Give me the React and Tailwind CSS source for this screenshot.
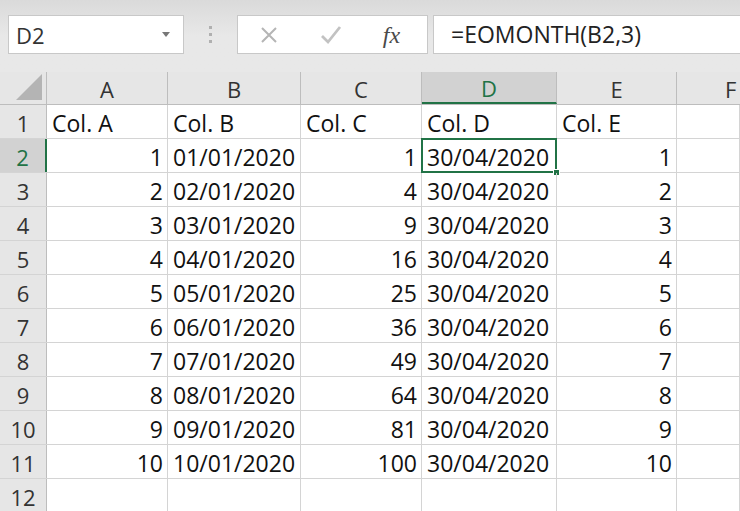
import React from "react";

const cols = [
  { key: "A", w: "w-[121px]" },
  { key: "B", w: "w-[133px]" },
  { key: "C", w: "w-[121px]" },
  { key: "D", w: "w-[135px]" },
  { key: "E", w: "w-[120px]" },
  { key: "F", w: "flex-1" },
];

const rows = [
  ["Col. A", "Col. B", "Col. C", "Col. D", "Col. E"],
];
for (let i = 1; i <= 10; i++) {
  rows.push([
    String(i),
    `${String(i).padStart(2, "0")}/01/2020`,
    String(i * i),
    "30/04/2020",
    String(i),
  ]);
}
rows.push(["", "", "", "", ""]);

const font = { fontFamily: '"Open Sans", "Noto Sans", sans-serif' };

export default function App() {
  return (
    <div className="w-[740px] h-[511px] overflow-hidden bg-white text-[#222]" style={font}>
      {/* Toolbar */}
      <div className="h-[72px] bg-gradient-to-b from-[#dadada] via-[#e8e8e8] to-[#e8e8e8] flex items-start pt-[15px] pl-[8px]">
        <div className="w-[176px] h-[39px] bg-white border border-[#c8c8c8] flex items-center pl-[7px] pr-[13px]">
          <span className="text-[22px] text-[#333] flex-1 leading-none">D2</span>
          <svg width="8" height="5" viewBox="0 0 8 5"><path d="M0 0h8L4 5z" fill="#777" /></svg>
        </div>
        <div className="w-[53px] h-[39px] flex flex-col items-center justify-center gap-[4px]">
          <div className="w-[3px] h-[3px] bg-[#b0b0b0]" />
          <div className="w-[3px] h-[3px] bg-[#b0b0b0]" />
          <div className="w-[3px] h-[3px] bg-[#b0b0b0]" />
        </div>
        <div className="w-[191px] h-[39px] bg-white border border-[#c8c8c8] flex items-center">
          <div className="w-[62px] flex justify-center">
            <svg width="20" height="20" viewBox="0 0 20 20"><path d="M3 3L17 17M17 3L3 17" stroke="#b5b5b5" strokeWidth="2" /></svg>
          </div>
          <div className="w-[62px] flex justify-center">
            <svg width="22" height="20" viewBox="0 0 22 20"><path d="M2 11l6 6L20 2" stroke="#c2c2c2" strokeWidth="2.8" fill="none" /></svg>
          </div>
          <div className="flex-1 flex justify-center pr-[6px]">
            <span className="italic text-[24px] text-[#4a4a4a] leading-none" style={{ fontFamily: '"Liberation Serif", serif' }}>fx</span>
          </div>
        </div>
        <div className="ml-[5px] flex-1 h-[39px] bg-white border border-[#c8c8c8] border-r-0 flex items-center pl-[17px]">
          <span className="text-[23px] text-[#222] leading-none">=EOMONTH(B2,3)</span>
        </div>
      </div>

      {/* Column headers */}
      <div className="flex h-[33px] bg-[#e6e6e6] border-b border-[#bdbdbd]">
        <div className="w-[47px] h-full border-r border-[#bdbdbd] flex items-end justify-end pr-[4px] pb-[4px]">
          <svg width="26" height="26" viewBox="0 0 26 26"><path d="M26 0V26H0z" fill="#b4b4b4" /></svg>
        </div>
        {cols.map((c) => (
          <div
            key={c.key}
            className={
              c.key === "D"
                ? `${c.w} h-full bg-[#d2d2d2] border-r border-[#bdbdbd] border-b-2 border-b-[#217346] flex items-center justify-center pt-[3px] text-[22px] text-[#217346]`
                : c.key === "F"
                ? `${c.w} h-full flex items-center pl-[48px] pt-[3px] text-[22px] text-[#333]`
                : `${c.w} h-full border-r border-[#bdbdbd] flex items-center justify-center pt-[3px] text-[22px] text-[#333]`
            }
          >
            {c.key}
          </div>
        ))}
      </div>

      {/* Rows */}
      {rows.map((r, ri) => {
        const rowNum = ri + 1;
        const selRow = rowNum === 2;
        return (
          <div key={ri} className="flex h-[34px] border-b border-[#d4d4d4]">
            <div
              className={
                selRow
                  ? "w-[47px] h-full bg-[#d2d2d2] border-r-2 border-[#217346] flex items-center justify-center pt-[4px] text-[22px] text-[#217346]"
                  : "w-[47px] h-full bg-[#e6e6e6] border-r border-[#bdbdbd] flex items-center justify-center pt-[4px] text-[22px] text-[#333]"
              }
            >
              {rowNum}
            </div>
            {cols.map((c, ci) => {
              const val = r[ci] ?? "";
              const isNum = rowNum > 1 && (ci === 0 || ci === 2 || ci === 4);
              const selected = selRow && c.key === "D";
              return (
                <div
                  key={c.key}
                  className={`${c.w} h-full relative border-r border-[#d4d4d4] flex items-center pt-[4px] text-[23px] text-[#111] whitespace-nowrap ${
                    isNum ? "justify-end pr-[4px]" : "pl-[5px]"
                  }`}
                >
                  {val}
                  {selected && (
                    <>
                      <div className="absolute left-[-1px] top-[-1px] right-[-1px] bottom-[-1px] border-2 border-[#217346]" />
                      <div className="absolute right-[-4px] bottom-[-4px] w-[7px] h-[7px] bg-[#217346] border border-white" />
                    </>
                  )}
                </div>
              );
            })}
          </div>
        );
      })}
    </div>
  );
}
